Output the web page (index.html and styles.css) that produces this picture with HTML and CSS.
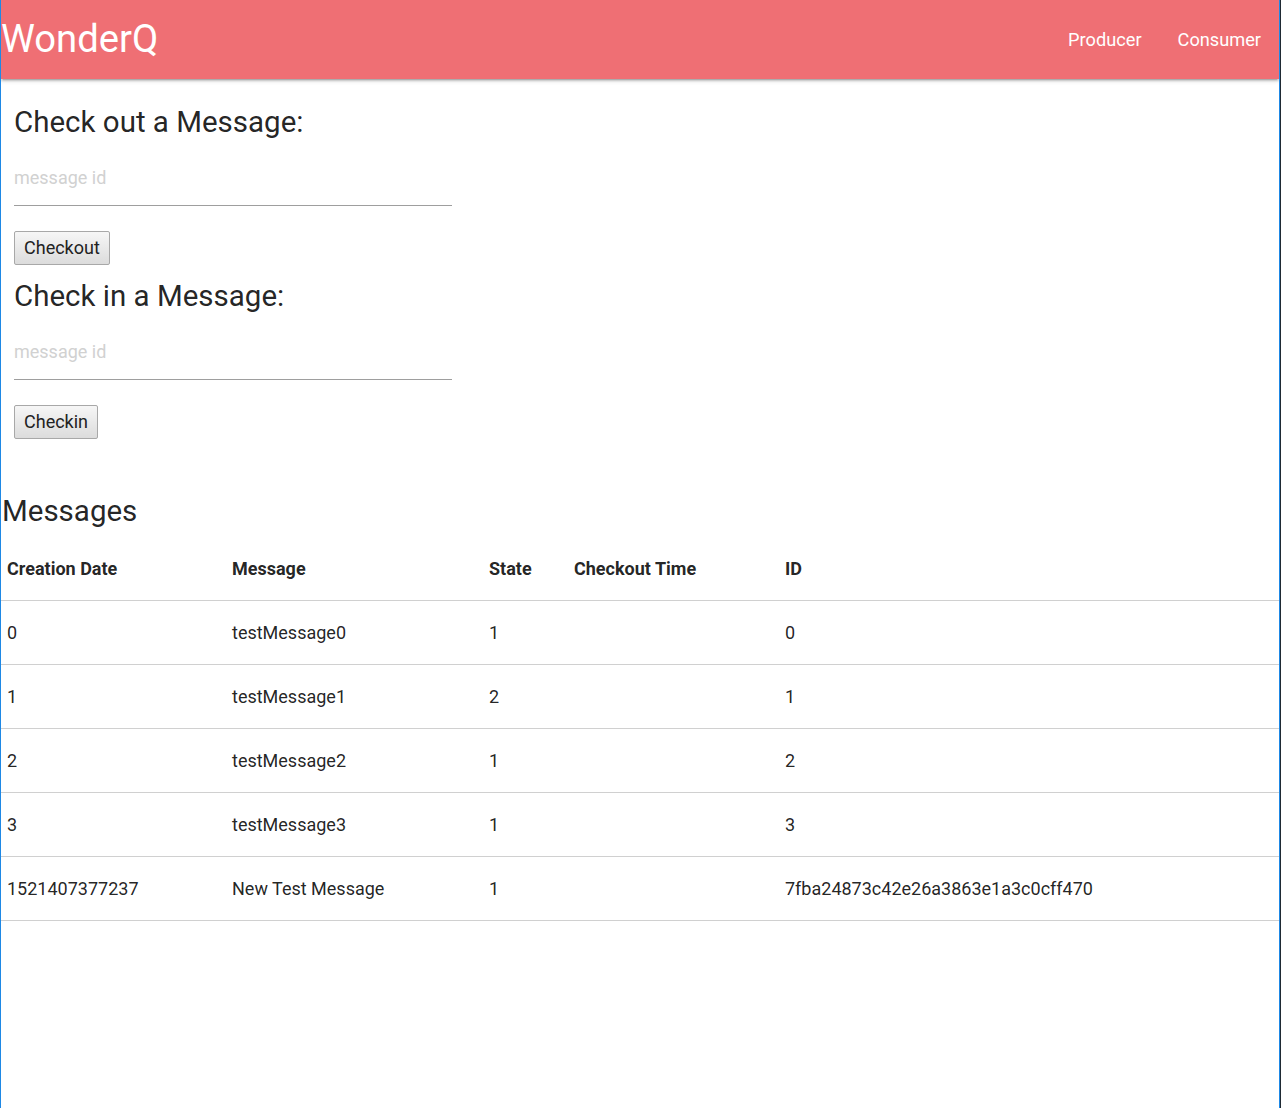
FILE: index.html
```html
<!DOCTYPE html>
<html lang="en">
<head>
<meta charset="utf-8">
<title>WonderQ</title>
<link rel="stylesheet" href="styles.css">
</head>
<body>
<nav class="nav">
  <a class="brand" href="#">WonderQ</a>
  <ul class="nav-links">
    <li><a href="#">Producer</a></li>
    <li><a href="#">Consumer</a></li>
  </ul>
</nav>
<main class="page">
  <section class="forms">
    <h5 class="form-title">Check out a Message:</h5>
    <input class="id-input" type="text" placeholder="message id">
    <button class="btn" type="button">Checkout</button>
    <h5 class="form-title">Check in a Message:</h5>
    <input class="id-input" type="text" placeholder="message id">
    <button class="btn" type="button">Checkin</button>
  </section>
  <section class="messages">
    <h5 class="messages-title">Messages</h5>
    <table class="table">
      <colgroup>
        <col class="c-date"><col class="c-msg"><col class="c-state"><col class="c-time"><col class="c-id">
      </colgroup>
      <thead>
        <tr><th>Creation Date</th><th>Message</th><th>State</th><th>Checkout Time</th><th>ID</th></tr>
      </thead>
      <tbody>
        <tr><td>0</td><td>testMessage0</td><td>1</td><td></td><td>0</td></tr>
        <tr><td>1</td><td>testMessage1</td><td>2</td><td></td><td>1</td></tr>
        <tr><td>2</td><td>testMessage2</td><td>1</td><td></td><td>2</td></tr>
        <tr><td>3</td><td>testMessage3</td><td>1</td><td></td><td>3</td></tr>
        <tr><td>1521407377237</td><td>New Test Message</td><td>1</td><td></td><td>7fba24873c42e26a3863e1a3c0cff470</td></tr>
      </tbody>
    </table>
  </section>
</main>
</body>
</html>
```
FILE: styles.css
```css
html {
  margin: 0;
  border-right: 1px solid #1f2a33;
  background: #fff;
}
body {
  margin: 0;
  min-height: 1108px;
  box-sizing: border-box;
  border-left: 1px solid #1e88e5;
  border-right: 1px solid #1e88e5;
  font-family: Roboto, "Noto Sans", sans-serif;
  color: rgba(0, 0, 0, 0.87);
  background: #fff;
}
.nav {
  display: flex;
  align-items: center;
  justify-content: space-between;
  height: 79px;
  background: #ef6f74;
  box-shadow: 0 2px 2px 0 rgba(0,0,0,0.14), 0 3px 1px -2px rgba(0,0,0,0.12), 0 1px 5px 0 rgba(0,0,0,0.2);
  position: relative;
  z-index: 1;
}
.brand {
  color: #fff;
  text-decoration: none;
  font-size: 38.2px;
  line-height: 79px;
  padding-left: 0;
}
.nav-links {
  display: flex;
  list-style: none;
  margin: 0;
  padding: 0;
}
.nav-links a {
  display: block;
  color: #fff;
  text-decoration: none;
  font-size: 18.2px;
  line-height: 77px;
  padding: 0 18px;
}
.page {
  padding-top: 12px;
}
.forms {
  width: 438px;
  padding-left: 13px;
}
.form-title {
  font-size: 29.5px;
  font-weight: 400;
  line-height: 36px;
  margin: 13px 0 10px;
}
.id-input {
  display: block;
  box-sizing: content-box;
  width: 100%;
  height: 55px;
  padding: 0;
  margin: 0;
  border: none;
  border-bottom: 1px solid #9e9e9e;
  outline: none;
  background: transparent;
  font-family: Roboto, "Noto Sans", sans-serif;
  font-size: 18px;
  color: rgba(0, 0, 0, 0.87);
}
.id-input::placeholder {
  color: #d1d1d1;
}
.btn {
  display: block;
  margin-top: 25px;
  height: 34px;
  padding: 0 9px 1px;
  border: 1px solid #a8a8a8;
  border-radius: 2px;
  background: linear-gradient(#f6f6f6, #dcdcdc);
  font-family: Roboto, "Noto Sans", sans-serif;
  font-size: 18px;
  color: #222;
}
.messages {
  margin-top: 54px;
}
.messages-title {
  font-size: 29.5px;
  font-weight: 400;
  line-height: 36px;
  margin: 0 0 8px;
  padding-left: 1px;
}
.table {
  width: 100%;
  border-collapse: separate;
  border-spacing: 0;
  table-layout: fixed;
  font-size: 18px;
}
.c-date { width: 225px; }
.c-msg { width: 257px; }
.c-state { width: 85px; }
.c-time { width: 211px; }
.table th,
.table td {
  text-align: left;
  padding: 0 6px;
  line-height: 63px;
  border-bottom: 1px solid #d0d0d0;
  white-space: nowrap;
}
.table th {
  font-weight: 700;
}
```
